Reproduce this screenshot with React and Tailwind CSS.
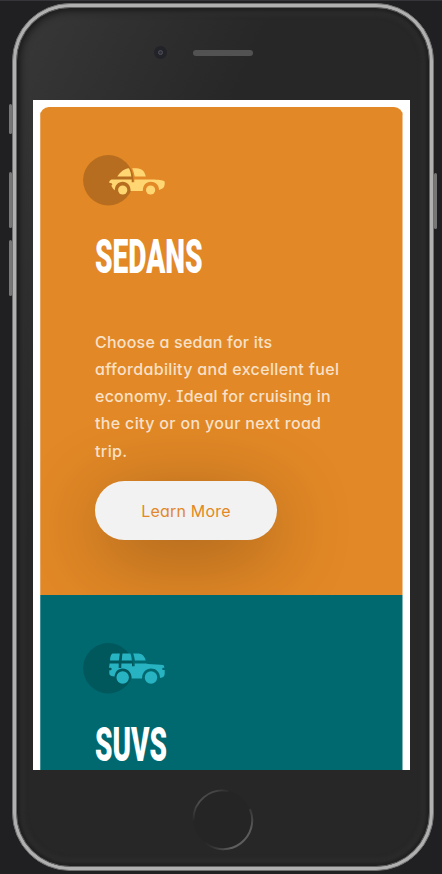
import React from 'react';

const bodyFont = "font-['Inter','Liberation_Sans',sans-serif] [font-feature-settings:'cv11','cv08','ss03']";

function Sedan() {
  return (
    <svg viewBox="0 0 82 51" className="block h-[51px] w-[82px]" aria-hidden="true">
      <circle cx="25.3" cy="25.2" r="25.2" fill="#b66d1f" />
      <path fill="#ffd671" d="M34.3 21.4C37.1 17.2 40.6 13.7 46 13.2L46.4 14.3C47.4 16.4 48 18.7 48.3 21.4Z" />
      <path fill="#ffd671" d="M49.2 13.2C56 12.9 61.2 13.5 62.8 21.4H51.7C51.1 18.3 50.3 15.6 49.2 13.2Z" />
      <path fill="#ffd671" d="M28.6 24.4H48.7V27.3H51.3V24.4H70C74.5 24.7 80 24.9 81.5 26.3C82.2 28.8 81.4 32.5 79.4 33.6L76 35C76 30 72.4 26.8 67.7 26.8S59.8 30.5 59.8 36H47.6C47.6 30.3 44.2 26.8 39.7 26.8S31.9 30.3 31.8 35.3C29.8 34.3 29.2 31.9 28.2 30.5C29.9 29.9 29.8 28.1 26.2 27.8C26 26.3 27 24.8 28.6 24.4Z" />
      <circle cx="39.7" cy="35" r="4.6" fill="#ffd671" />
      <circle cx="67.6" cy="35" r="4.6" fill="#ffd671" />
    </svg>
  );
}

function Suv() {
  return (
    <svg viewBox="0 0 82 51" className="block h-[51px] w-[82px]" aria-hidden="true">
      <circle cx="25.3" cy="25.2" r="25.2" fill="#00575c" />
      <path fill="#27b3c2" d="M29.5 10.5H36.8L35.9 17.5H27Q27.4 11.2 29.5 10.5Z" />
      <path fill="#27b3c2" d="M39.4 10.5H47.4Q48.7 13.8 48.9 17.5H38.7Z" />
      <path fill="#27b3c2" d="M50.2 10.5H55.5Q60.8 10.7 62.7 17.5H51.9Q51.4 13.8 50.2 10.5Z" />
      <path fill="#27b3c2" d="M26.6 20.6H35.7V24.9H38.2L38.4 20.6H49V23.2H51.7V20.6H63Q65.5 21.5 80.5 21.9L81.5 24.7H79.7Q78.6 25.9 79.7 27.1H81.7V30.8Q81.6 34.7 77 35C77 28.8 72.8 25.6 68 25.6S59.3 29.1 59 35.4H48.7C48.4 29.1 44.6 25.6 39.7 25.6S32 29.2 31.5 33.6Q27 33.5 26.3 30.8V27.2H28Q29.6 26 28 24.8H26Z" />
      <circle cx="39.7" cy="34.5" r="6.2" fill="#27b3c2" />
      <circle cx="68" cy="34.5" r="6.2" fill="#27b3c2" />
    </svg>
  );
}

function Title({ children, scale }) {
  return (
    <h2 className={`mt-[33px] h-9 w-max origin-left whitespace-nowrap font-['Roboto','Liberation_Sans',sans-serif] text-[49px] font-black leading-9 text-white ${scale}`}>
      {children}
    </h2>
  );
}

function SideKey({ className }) {
  return <div className={`w-[3px] rounded-sm bg-[#777] ${className}`} />;
}

function HomeButton() {
  return (
    <svg viewBox="0 0 62 62" className="block size-[62px]" fill="none" aria-hidden="true">
      <defs>
        <linearGradient id="ringTop" x1="0" y1="32" x2="38" y2="0" gradientUnits="userSpaceOnUse">
          <stop offset="0" stopColor="#555" stopOpacity="0" />
          <stop offset=".35" stopColor="#4c4c4c" />
          <stop offset=".75" stopColor="#444" />
          <stop offset="1" stopColor="#484848" stopOpacity="0" />
        </linearGradient>
        <linearGradient id="ringBottom" x1="14" y1="56" x2="62" y2="18" gradientUnits="userSpaceOnUse">
          <stop offset="0" stopColor="#666" stopOpacity="0" />
          <stop offset=".3" stopColor="#606060" />
          <stop offset=".75" stopColor="#5a5a5a" />
          <stop offset="1" stopColor="#666" stopOpacity="0" />
        </linearGradient>
      </defs>
      <circle cx="30.5" cy="30.5" r="29" fill="#252525" />
      <path d="M1.5 31.5A29 29 0 0 1 36.5 2.1" stroke="url(#ringTop)" strokeWidth="1.8" />
      <path d="M13 53.7A29 29 0 0 0 58 20" stroke="url(#ringBottom)" strokeWidth="2" />
    </svg>
  );
}

const copy = [
  ['Choose a sedan for its', 'tracking-[0.22px]'],
  ['affordability and excellent fuel', 'tracking-[0.34px]'],
  ['economy. Ideal for cruising in', 'tracking-[0.24px]'],
  ['the city or on your next road', 'tracking-[0.34px]'],
  ['trip.', 'tracking-[0.4px]'],
];

export default function App() {
  return (
    <div className="flex h-[874px] w-[442px] overflow-hidden border-t border-[#36363a] bg-[#202022]">
      <div className="flex w-3 shrink-0 flex-col items-end pt-[103px]">
        <SideKey className="h-[30px]" />
        <SideKey className="mt-[38px] h-14" />
        <SideKey className="mt-3 h-14" />
      </div>

      <div className="mt-[2px] flex h-[868px] w-[422px] shrink-0 flex-col rounded-[58px] border border-[#707070] bg-[#b0b0b0] p-[3px]">
        <div className="flex min-h-0 flex-1 flex-col rounded-[54px] border border-[#666] bg-[#272727] bg-linear-115 from-[#383838] via-[#272727] via-32% to-[#272727] px-4 shadow-[inset_0_0_3px_3px_#202020,inset_0_0_4px_7px_#2d2d2d]">
          <div className="flex h-[92px] shrink-0 items-start pt-[37px]">
            <div className="ml-[121px] mt-px flex size-[13px] items-center justify-center rounded-full bg-[#222229]">
              <div className="size-[5px] rounded-full border border-[#505058] bg-[#30303a]" />
            </div>
            <div className="ml-[26px] mt-[4.5px] h-[6px] w-[60px] rounded-full bg-[#404040] bg-[radial-gradient(circle,#5c5c5c_0.6px,transparent_0.9px)] bg-size-[2px_2px]" />
          </div>

          <div className="h-[670px] w-[377px] shrink-0 overflow-hidden bg-white px-[7px] pt-[7px]">
            <div className="overflow-hidden rounded-t-[9px]">
              <section className="h-[488px] border-l border-r border-l-[#e9a55b] border-r-[#f0c392] bg-[#e28826] pl-[54px] pt-[48px]">
                <div className="-ml-3">
                  <Sedan />
                </div>
                <Title scale="scale-x-[0.573]">SEDANS</Title>
                <p className={`mt-[53.6px] text-[16px] font-medium leading-[27.25px] text-[#f8e1c8] ${bodyFont}`}>
                  {copy.map(([line, tracking]) => (
                    <span key={line} className={`block whitespace-nowrap ${tracking}`}>{line}</span>
                  ))}
                </p>
                <button className={`mt-[16.1px] block h-[59.5px] w-[182px] rounded-full bg-[#f2f2f2] pt-px text-[16px] tracking-[0.2px] text-[#e28826] shadow-[0_16px_80px_rgba(0,0,0,0.3)] ${bodyFont}`}>
                  Learn More
                </button>
              </section>
              <section className="relative h-[488px] border-l border-r border-l-[#408f94] border-r-[#80b4b7] bg-[#006970] pl-[54px] pt-[47.5px]">
                <div className="-ml-3">
                  <Suv />
                </div>
                <Title scale="scale-x-[0.57]">SUVS</Title>
              </section>
            </div>
          </div>

          <div className="flex flex-1 justify-center pt-[19px]">
            <HomeButton />
          </div>
        </div>
      </div>

      <div className="flex flex-col pt-[172px]">
        <SideKey className="h-14" />
      </div>
    </div>
  );
}
